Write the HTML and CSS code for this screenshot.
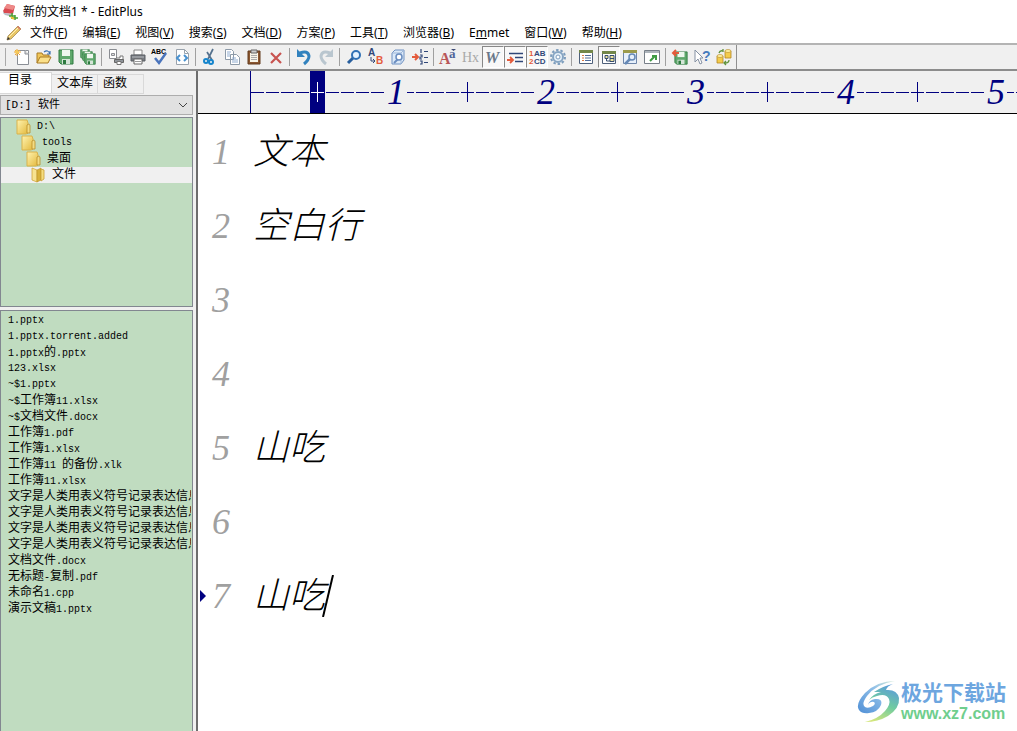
FILE: index.html
```html
<!DOCTYPE html>
<html lang="zh-CN">
<head>
<meta charset="utf-8">
<title>新的文档1 * - EditPlus</title>
<link rel="stylesheet" href="styles.css">
</head>
<body>
<svg class="defs" aria-hidden="true">
  <defs>
    <linearGradient id="gold" x1="0" y1="0" x2="1" y2="1"><stop offset="0" stop-color="#fff3b0"/><stop offset="1" stop-color="#e3b93c"/></linearGradient>
    <linearGradient id="swoosh" x1="0.700" y1="0" x2="0.300" y2="1"><stop offset="0" stop-color="#5b9bdc"/><stop offset=".5" stop-color="#6fcba0"/><stop offset="1" stop-color="#d3e67c"/></linearGradient>
    <linearGradient id="sky" x1="1" y1="0" x2="0" y2="1"><stop offset="0" stop-color="#d6ecd8"/><stop offset=".4" stop-color="#8fbfe8"/><stop offset="1" stop-color="#4f8fd6"/></linearGradient>
    <symbol id="folder" viewBox="0 0 16 16"><path d="M1 1h10l1 3v10l-2 1H1z" fill="url(#gold)" stroke="#d9b24a"/><path d="M11 6q3-2 3 1v7h-3z" fill="#f3dc83" stroke="#b98d28" stroke-width=".8"/></symbol>
    <symbol id="folder-open" viewBox="0 0 16 16"><path d="M1 1l5 2v12l-5-2z" fill="#f7e391" stroke="#d0a63a" stroke-width=".8"/><path d="M6 3l4-2v12l-4 2z" fill="#d8b13a" stroke="#bb922a" stroke-width=".6"/><path d="M10 2l3 1v9l-3 2z" fill="#f5dd80" stroke="#c99f35" stroke-width=".8"/></symbol>
    <symbol id="disk" viewBox="0 0 16 16"><path d="M1 1h14v14H3l-2-2z" fill="#5fa86c" stroke="#2f7a40"/><path d="M4 1h8v6H4z" fill="#eef7ee"/><path d="M4 10h8v5H4z" fill="#d5e5d8"/><path d="M5 11h3v4H5z" fill="#2c7a3f"/></symbol>
  </defs>
</svg>
<div class="app">
  <header class="titlebar">
    <svg class="app-icon" viewBox="0 0 16 16"><path d="M5 0l8 2-2 8-9-1-1-2z" fill="#d94a50"/><path d="M5 0l8 2-2 4-9-2z" fill="#ee8a88"/><path d="M1 7l1 2 9 1v3l-8-2-2-2z" fill="#b9bcc4"/><path d="M10 9v6M7 12h6M13 11v5M11 14h5" stroke="#4aa336" stroke-width="1.5"/><path d="M9 13l3 2" stroke="#f1c232" stroke-width="2"/></svg>
    <span>新的文档1 * - EditPlus</span>
  </header>
  <nav class="menubar">
    <svg class="pencil" viewBox="0 0 16 16"><path d="M1 15l1-4L12 1l3 3L5 14z" fill="#e8c766" stroke="#a58a55" stroke-width=".8"/><path d="M11 2l3 3 1-1-3-3z" fill="#d87d6a"/><path d="M3 12l9-9" stroke="#fff0b8"/><path d="M1 15l1-3 2 2z" fill="#333"/></svg>
    <button>文件(<u>F</u>)</button><button>编辑(<u>E</u>)</button><button>视图(<u>V</u>)</button><button>搜索(<u>S</u>)</button><button>文档(<u>D</u>)</button><button>方案(<u>P</u>)</button><button>工具(<u>T</u>)</button><button>浏览器(<u>B</u>)</button><button>E<u>m</u>met</button><button>窗口(<u>W</u>)</button><button>帮助(<u>H</u>)</button>
  </nav>
  <div class="toolbar" role="toolbar" aria-label="工具栏">
    <span class="grip"></span>
    <button aria-label="新建"><svg viewBox="0 0 16 16"><path d="M3.500 1.500h11v14h-11z" fill="#fff" stroke="#8b8f96"/><path d="M11 1v4h4" fill="#ddd" stroke="#8b8f96"/><path d="M3 0v7M0 3h7M1 1l5 5M6 1L1 6" stroke="#e9a33a"/><circle cx="3" cy="3" r="2" fill="#f7c958"/></svg></button>
    <button aria-label="打开"><svg viewBox="0 0 16 16"><path d="M1 14V4h5l1 2h6v3" fill="#f0c65a" stroke="#a87a24"/><path d="M1 14l3-6h11l-3 6z" fill="#fbe08a" stroke="#a87a24"/><path d="M8 3q4-3 6 2M14 2v3h-3" fill="none" stroke="#3a6fb0" stroke-width="1.200"/></svg></button>
    <button aria-label="保存"><svg viewBox="0 0 16 16"><use href="#disk"/></svg></button>
    <button aria-label="全部保存"><svg viewBox="0 0 16 16"><use href="#disk" width="10" height="10"/><use href="#disk" x="2" y="2" width="11" height="11"/><use href="#disk" x="4" y="4" width="12" height="12"/></svg></button>
    <span class="sep"></span>
    <button aria-label="打印预览"><svg viewBox="0 0 16 16"><path d="M1.500 .5h7v9h-7z" fill="#fff" stroke="#8a8d92"/><path d="M3.500 4.500h3v2h-3z" fill="#ddd" stroke="#8a8d92"/><path d="M8 9h4V7h3v5H8z" fill="#fff" stroke="#777"/><path d="M6.500 10.500h9v3h-9z" fill="#90959b" stroke="#666"/><path d="M9 12.500h4v3H9z" fill="#fff" stroke="#777"/></svg></button>
    <button aria-label="打印"><svg viewBox="0 0 16 16"><path d="M4 1h8v5H4z" fill="#fff" stroke="#888"/><path d="M1 6h14v6H1z" fill="#777b81" stroke="#5b5f64"/><path d="M2 8h12" stroke="#b7babd"/><path d="M4 10h8v5H4z" fill="#fff" stroke="#666"/><path d="M5 12.500h6" stroke="#999"/></svg></button>
    <button aria-label="拼写检查"><svg viewBox="0 0 16 16"><text x="-1" y="5" class="i-abc">ABC</text><path d="M3 9l4 5 7-10" fill="none" stroke="#4a74bc" stroke-width="2.500"/></svg></button>
    <button aria-label="浏览器"><svg viewBox="0 0 16 16"><path d="M2.500 .5h8l4 4v11h-12z" fill="#fff" stroke="#9aa3ad"/><path d="M10.500 .5v4h4" fill="none" stroke="#9aa3ad"/><path d="M6 6L3 9l3 3M10 6l3 3-3 3" fill="none" stroke="#4a92d0" stroke-width="2"/></svg></button>
    <span class="sep"></span>
    <button aria-label="剪切"><svg viewBox="0 0 16 16"><path d="M11 0L6 10M5 3l5 8" stroke="#55718d" stroke-width="1.700"/><circle cx="4" cy="12" r="2" fill="none" stroke="#1685cc" stroke-width="2"/><circle cx="9" cy="13" r="2" fill="none" stroke="#1685cc" stroke-width="2"/></svg></button>
    <button aria-label="复制"><svg viewBox="0 0 16 16"><path d="M1.500 .5h6l2 2v8h-8zM6.500 5.500h6l3 3v7h-9z" fill="#fff" stroke="#8d9aa8"/><path d="M3 3h4M3 5h3M3 7h3M8 9h4M8 11h6M8 13h6" stroke="#91add0"/></svg></button>
    <button aria-label="粘贴"><svg viewBox="0 0 16 16"><path d="M2 2h12v13H2z" fill="#8b5730" stroke="#623b1d"/><path d="M4 4h8v9H4z" fill="#f7f4e8"/><path d="M5 1h6v3H5z" fill="#ccc" stroke="#666"/><path d="M5 6.500h6M5 8.500h6M5 10.500h6" stroke="#aaa"/></svg></button>
    <button aria-label="删除"><svg viewBox="0 0 16 16"><path d="M3 4l10 10M13 4L3 14" stroke="#c85350" stroke-width="2.200"/></svg></button>
    <span class="sep"></span>
    <button aria-label="撤销"><svg viewBox="0 0 16 16"><path d="M4 4q8-3 9 3 0 4-5 8" fill="none" stroke="#3282be" stroke-width="3"/><path d="M1 0v8h8z" fill="#3282be"/></svg></button>
    <button aria-label="重做"><svg viewBox="0 0 16 16"><path d="M12 4Q4 1 3 7q0 4 5 8" fill="none" stroke="#b9c6cf" stroke-width="3"/><path d="M15 0v8H7z" fill="#b9c6cf"/></svg></button>
    <span class="sep"></span>
    <button aria-label="查找"><svg viewBox="0 0 16 16"><path d="M2 14l5-5" stroke="#285f9e" stroke-width="3"/><circle cx="10" cy="6" r="4" fill="#e4f2ff" stroke="#2f70b5" stroke-width="2"/></svg></button>
    <button aria-label="替换"><svg viewBox="0 0 16 16"><text x="0" y="7" class="i-a">A</text><text x="8" y="15" class="i-b">B</text><path d="M3 8v4h4M5 10l2 2-2 2" fill="none" stroke="#334878"/></svg></button>
    <button aria-label="在文件中查找"><svg viewBox="0 0 16 16"><path d="M2 4l3-3h9v10l-3 4H2z" fill="#dbe9f8" stroke="#6f91c2"/><path d="M2 4h9v11M11 4l3-3" fill="none" stroke="#9db6d8"/><path d="M4 14l4-4" stroke="#6b8ec0" stroke-width="2"/><circle cx="9" cy="8" r="3" fill="#fff" stroke="#6b8ec0" stroke-width="1.500"/></svg></button>
    <button aria-label="转到行"><svg viewBox="0 0 16 16"><path d="M0 8h6M3 5l3 3-3 3" fill="none" stroke="#e45b3b" stroke-width="2"/><path d="M9 0v4M8 6h2v2H8v2h2M8 12h2v3H8M12 2.500h4M12 8.500h4M12 13.500h4" fill="none" stroke="#304778" stroke-width="1.200"/></svg></button>
    <span class="sep"></span>
    <button aria-label="字体"><svg viewBox="0 0 16 16"><text x="-1" y="15" class="i-font">A</text><text x="9" y="9" class="i-small">a</text><path d="M11 0h5l-2.500 2z" fill="#3d4b76"/></svg></button>
    <button aria-label="十六进制"><svg viewBox="0 0 16 16"><text x="0" y="13" class="i-hx">Hx</text></svg></button>
    <button class="on" aria-label="自动换行" aria-pressed="true"><svg viewBox="0 0 16 16"><text x="0" y="14" class="i-w">W</text></svg></button>
    <button class="on" aria-label="缩进" aria-pressed="true"><svg viewBox="0 0 16 16"><path d="M2 4.500h14M8 8.500h8M8 12.500h8" stroke="#304778" stroke-width="1.500"/><path d="M0 11h5M3 8l3 3-3 3" fill="none" stroke="#e45b3b" stroke-width="1.800"/></svg></button>
    <button class="on" aria-label="行号" aria-pressed="true"><svg viewBox="0 0 16 16"><text x="0" y="7" class="i-num">1</text><text x="5" y="7" class="i-ab">AB</text><text x="0" y="15" class="i-num">2</text><text x="5" y="15" class="i-ab">CD</text></svg></button>
    <button aria-label="设置"><svg viewBox="0 0 16 16"><circle cx="8" cy="8" r="7" fill="none" stroke="#7d9dbd" stroke-width="2" stroke-dasharray="2.500 1.900"/><circle cx="8" cy="8" r="5" fill="#e4eff8" stroke="#86a5c3" stroke-width="2"/><circle cx="8" cy="8" r="2" fill="#fff" stroke="#7d9dbd"/></svg></button>
    <span class="sep"></span>
    <button aria-label="文档列表"><svg viewBox="0 0 16 16"><path d="M1.500 1.500h13v13h-13z" fill="#fff" stroke="#4e607b"/><path d="M1 2.500h14" stroke="#73874a" stroke-width="3"/><path d="M4 6.500h2M4 9h2M4 11.500h2" stroke="#d97842"/><path d="M7 6.500h6M7 9h6M7 11.500h6" stroke="#506c9a"/></svg></button>
    <button class="on" aria-label="目录窗口" aria-pressed="true"><svg viewBox="0 0 16 16"><path d="M1.500 2.500h13v12h-13z" fill="#fff" stroke="#4e607b"/><path d="M1 3.500h14" stroke="#73874a" stroke-width="3"/><path d="M4 6.500h3v3H4zM9 6.500h4v6H9zM9 9.500h4" fill="#eee49c" stroke="#374e6f"/><path d="M5.500 9v3H9" fill="none" stroke="#374e6f"/></svg></button>
    <button aria-label="工具设置"><svg viewBox="0 0 16 16"><path d="M1.500 1.500h13v13h-13z" fill="#e7f0fb" stroke="#6e86aa"/><path d="M1 2.500h14" stroke="#9b9a4c" stroke-width="3"/><path d="M3 15l6-6" stroke="#6689b6" stroke-width="2.500"/><circle cx="10" cy="8" r="3" fill="#e7f0fb" stroke="#6689b6" stroke-width="1.500"/></svg></button>
    <button aria-label="新窗口"><svg viewBox="0 0 16 16"><path d="M.5 1.500h15v13H.5z" fill="#fff" stroke="#777f88"/><path d="M1 3h14" stroke="#aeb5bc" stroke-width="2"/><path d="M6 12l5-5M8 7h4v4" fill="none" stroke="#3f9c44" stroke-width="2"/></svg></button>
    <span class="sep"></span>
    <button aria-label="上传保存"><svg viewBox="0 0 16 16"><use href="#disk" x="2" y="2" width="14" height="14"/><path d="M7 4H2M4 1L1 4l3 3" fill="none" stroke="#e45b3b" stroke-width="2"/></svg></button>
    <button aria-label="帮助"><svg viewBox="0 0 16 16"><path d="M1 1v12l3-3 2 5 2-1-2-5h3z" fill="#fff" stroke="#8591a3"/><text x="8" y="12" class="i-help">?</text></svg></button>
    <button aria-label="同步"><svg viewBox="0 0 16 16"><path d="M9 2v7h6V2zM1 7v7h6V7z" fill="#f4cc4c" stroke="#b38623" stroke-width=".8"/><ellipse cx="12" cy="2" rx="3" ry="1.500" fill="#fff0a0" stroke="#b38623" stroke-width=".6"/><ellipse cx="4" cy="7" rx="3" ry="1.500" fill="#fff0a0" stroke="#b38623" stroke-width=".6"/><path d="M3 4q1-3 4-2M7 0v3M13 11q0 3-4 3M10 12l-2 2 2 2" fill="none" stroke="#5f923b" stroke-width="1.300"/></svg></button>
    <span class="end"></span>
  </div>
  <div class="main">
    <aside class="sidebar">
      <div class="tabs" role="tablist"><button class="tab active" role="tab" aria-selected="true">目录</button><button class="tab" role="tab">文本库</button><button class="tab" role="tab">函数</button></div>
      <div class="drive">
        <select aria-label="驱动器"><option>[D:] 软件</option></select>
        <svg viewBox="0 0 10 6"><path d="M1 1l4 4 4-4" fill="none" stroke="#444"/></svg>
      </div>
      <ul class="tree">
        <li class="level-1"><svg><use href="#folder"/></svg>D:\</li>
        <li class="level-2"><svg><use href="#folder"/></svg>tools</li>
        <li class="level-3"><svg><use href="#folder"/></svg><span class="han">桌面</span></li>
        <li class="level-4 selected"><svg><use href="#folder-open"/></svg><span class="han">文件</span></li>
      </ul>
      <ul class="files">
        <li>1.pptx</li>
        <li>1.pptx.torrent.added</li>
        <li>1.pptx<span class="han">的</span>.pptx</li>
        <li>123.xlsx</li>
        <li>~$1.pptx</li>
        <li>~$<span class="han">工作簿</span>11.xlsx</li>
        <li>~$<span class="han">文档文件</span>.docx</li>
        <li><span class="han">工作簿</span>1.pdf</li>
        <li><span class="han">工作簿</span>1.xlsx</li>
        <li><span class="han">工作簿</span>11 <span class="han">的备份</span>.xlk</li>
        <li><span class="han">工作簿</span>11.xlsx</li>
        <li><span class="han">文字是人类用表义符号记录表达信息</span></li>
        <li><span class="han">文字是人类用表义符号记录表达信息</span></li>
        <li><span class="han">文字是人类用表义符号记录表达信息</span></li>
        <li><span class="han">文字是人类用表义符号记录表达信息</span></li>
        <li><span class="han">文档文件</span>.docx</li>
        <li><span class="han">无标题</span>-<span class="han">复制</span>.pdf</li>
        <li><span class="han">未命名</span>1.cpp</li>
        <li><span class="han">演示文稿</span>1.pptx</li>
      </ul>
    </aside>
    <main class="editor">
      <div class="ruler">
        <div class="scale">
          <div class="unit"><span class="tick cursor"></span><span class="digit">1</span></div>
          <div class="unit"><span class="tick"></span><span class="digit">2</span></div>
          <div class="unit"><span class="tick"></span><span class="digit">3</span></div>
          <div class="unit"><span class="tick"></span><span class="digit">4</span></div>
          <div class="unit"><span class="tick"></span><span class="digit">5</span></div>
        </div>
      </div>
      <div class="document">
        <ol class="gutter"><li>1</li><li>2</li><li>3</li><li>4</li><li>5</li><li>6</li><li class="current">7</li></ol>
        <textarea aria-label="文档内容" spellcheck="false" rows="7">文本
空白行


山吃

山吃</textarea>
        <svg class="caret" viewBox="0 0 12 42"><path d="M11 0L1 42" stroke="#000" stroke-width="2"/></svg>
      </div>
      <div class="watermark">
        <svg viewBox="0 0 44 42"><path d="M38 0Q20 0 8 12-2 23 2 29q3 4 10 3 9-1 12-8 2-7-6-6-6 1-7 6 2-4 6-3 2 2-1 4-5 3-8 1-4-3 2-11Q19 3 38 0z" fill="url(#sky)"/><path d="M17 11q9-6 19-8-6 2-7 6 11-1 13 8 1 10-11 18-10 6-23 6 13-3 20-11 6-7 4-12-3-6-12-3-5 1-8 4 4-6 12-8z" fill="url(#swoosh)"/></svg>
        <div class="brand"><strong>极光下载站</strong><span>www.xz7.com</span></div>
      </div>
    </main>
  </div>
</div>
</body>
</html>
```
FILE: styles.css
```css
* { box-sizing: border-box; }
body { margin: 0; background: #fff; color: #000; font: 12px/16px "Noto Sans", "Noto Sans CJK SC", sans-serif; }
button { border: 0; padding: 0; margin: 0; background: none; color: inherit; font: inherit; }
ul, ol { margin: 0; padding: 0; list-style: none; }
.defs { position: absolute; width: 0; height: 0; }

.app { display: flex; flex-direction: column; height: 100vh; overflow: hidden; }
.titlebar { display: flex; align-items: center; gap: 5px; height: 23px; padding-left: 2px; flex: none; }
.app-icon { width: 16px; height: 16px; }
.menubar { display: flex; align-items: center; height: 20px; padding-left: 6px; flex: none; }
.menubar button { padding: 0 7px 0 8px; white-space: nowrap; }
.menubar u { text-underline-offset: 1px; }
.pencil { width: 16px; height: 16px; }

.toolbar { display: flex; align-items: center; flex: none; height: 28px; padding-left: 5px; background: #f0f0f0; border-top: 2px solid #b4b4b4; border-bottom: 2px solid #8c8c8c; }
.toolbar button { width: 22px; height: 22px; flex: none; display: flex; align-items: center; padding-left: 2px; }
.toolbar svg { width: 16px; height: 16px; overflow: visible; }
.toolbar .on { border: 1px solid #fff; border-top-color: #888; border-left-color: #888; background: #f8f8f8; }
.grip { width: 7px; height: 18px; flex: none; background: linear-gradient(#aaa, #aaa) 0 0 / 1px 100% no-repeat; }
.sep { width: 6px; height: 18px; flex: none; background: linear-gradient(#a0a0a0, #a0a0a0) 1px 0 / 1px 100% no-repeat; }
.end { width: 1px; align-self: stretch; background: #909090; }
.i-abc { font: bold 7px "Liberation Sans", sans-serif; }
.i-a, .i-b { font: bold 10px "Liberation Sans", sans-serif; fill: #304778; }
.i-b { fill: #e45b3b; }
.i-font { font: bold 16px "Liberation Serif", serif; fill: #b95758; }
.i-small { font: bold 13px "Liberation Serif", serif; fill: #506598; }
.i-hx { font: 14px "Liberation Serif", serif; fill: #a8a8a8; }
.i-w { font: italic bold 16px "Liberation Serif", serif; fill: #6a788a; }
.i-num, .i-ab { font: bold 8px "Liberation Sans", sans-serif; fill: #304778; }
.i-num { fill: #e45b3b; }
.i-help { font: bold 14px "Liberation Sans", sans-serif; fill: #487bbc; }

.main { display: flex; flex: 1; min-height: 0; }
.sidebar { display: flex; flex-direction: column; flex: none; width: 196px; padding-right: 3px; background: #f0f0f0; font: 10px/16px "Liberation Mono", "Noto Sans CJK SC", monospace; }
.han { font: 12px/16px "Liberation Mono", "Noto Sans CJK SC", sans-serif; }
.tabs { display: flex; align-items: flex-end; height: 23px; flex: none; }
.tab { width: 46px; height: 20px; padding: 0 0 0 5px; border: 1px solid #d9d9d9; border-left: 0; font: 12px/16px "Liberation Mono", "Noto Sans CJK SC", sans-serif; text-align: left; white-space: nowrap; }
.tab.active { height: 22px; width: 52px; padding: 0 0 4px 8px; background: #fff; }
.drive { display: flex; align-items: center; height: 20px; margin-top: 1px; border: 1px solid #adadad; background: #e1e1e1; flex: none; }
.drive select { flex: 1; width: 100%; appearance: none; border: 0; padding: 0 4px; background: none; color: #000; font: 11px/16px "Liberation Mono", "Noto Sans CJK SC", monospace; }
.drive svg { width: 10px; height: 6px; margin-right: 4px; }
.tree, .files { background: #c0dcc0; border: 1px solid #828790; overflow: hidden; }
.tree { height: 190px; margin-top: 2px; padding-top: 1px; flex: none; }
.tree li { display: flex; align-items: center; gap: 5px; height: 16px; }
.tree svg { width: 16px; height: 16px; flex: none; }
.level-1 { padding-left: 15px; }
.level-2 { padding-left: 20px; }
.level-3 { padding-left: 25px; }
.level-4 { padding-left: 30px; }
.tree .selected { background: #f0f0f0; }
.files { flex: 1; margin-top: 3px; padding: 2px 1px 0 7px; border-bottom: 0; }
.files li { height: 16px; overflow: hidden; white-space: pre; }

.editor { position: relative; display: flex; flex-direction: column; flex: 1; min-width: 0; border-left: 2px solid #6d6d6d; overflow: hidden; }
.ruler { flex: none; height: 43px; padding-left: 52px; background: #f0f0f0; border-bottom: 1px solid #000; }
.scale { display: flex; height: 42px; padding-left: 59px; border-left: 1px solid #000080; overflow: hidden; background: repeating-linear-gradient(90deg, #000080 0 13px, transparent 13px 15px) 0 21px / 100% 1px no-repeat; }
.unit { display: flex; gap: 60px; width: 150px; flex: none; }
.tick { width: 15px; background: linear-gradient(#000080, #000080) center / 1px 20px no-repeat; }
.cursor { background: linear-gradient(#fff, #fff) center / 1px 20px no-repeat, linear-gradient(#fff, #fff) center / 13px 1px no-repeat, #000080; }
.digit { width: 22px; background: #f0f0f0; color: #000080; font: italic 36px/42px "Liberation Serif", serif; text-align: center; }
.document { position: relative; display: flex; flex: 1; padding-top: 1px; }
.gutter { width: 52px; flex: none; color: #a0a0a0; font: italic 36px/74px "Liberation Serif", serif; }
.gutter li { display: flex; align-items: center; justify-content: flex-end; height: 74px; padding-right: 20px; }
.gutter .current { justify-content: space-between; padding-left: 2px; }
.current::before { content: ""; border: 6px solid transparent; border-left-color: #000080; border-right: 0; }
textarea { flex: 1; min-width: 0; height: 520px; margin: 0; padding: 0 0 0 3px; border: 0; outline: 0; resize: none; overflow: hidden; background: none; color: #000; font: italic 300 36px/74px "Liberation Serif", "Noto Sans CJK SC", serif; }
.caret { position: absolute; left: 124px; top: 461px; width: 12px; height: 42px; }
.watermark { position: absolute; right: 11px; bottom: 8px; display: flex; align-items: center; }
.watermark svg { width: 44px; height: 42px; }
.brand { display: flex; flex-direction: column; }
.brand strong { color: #6da6df; font: bold 21px/24px "Liberation Sans", "Noto Sans CJK SC", sans-serif; }
.brand span { color: #6fce8d; font: bold 16px/18px "Liberation Sans", sans-serif; }
```
